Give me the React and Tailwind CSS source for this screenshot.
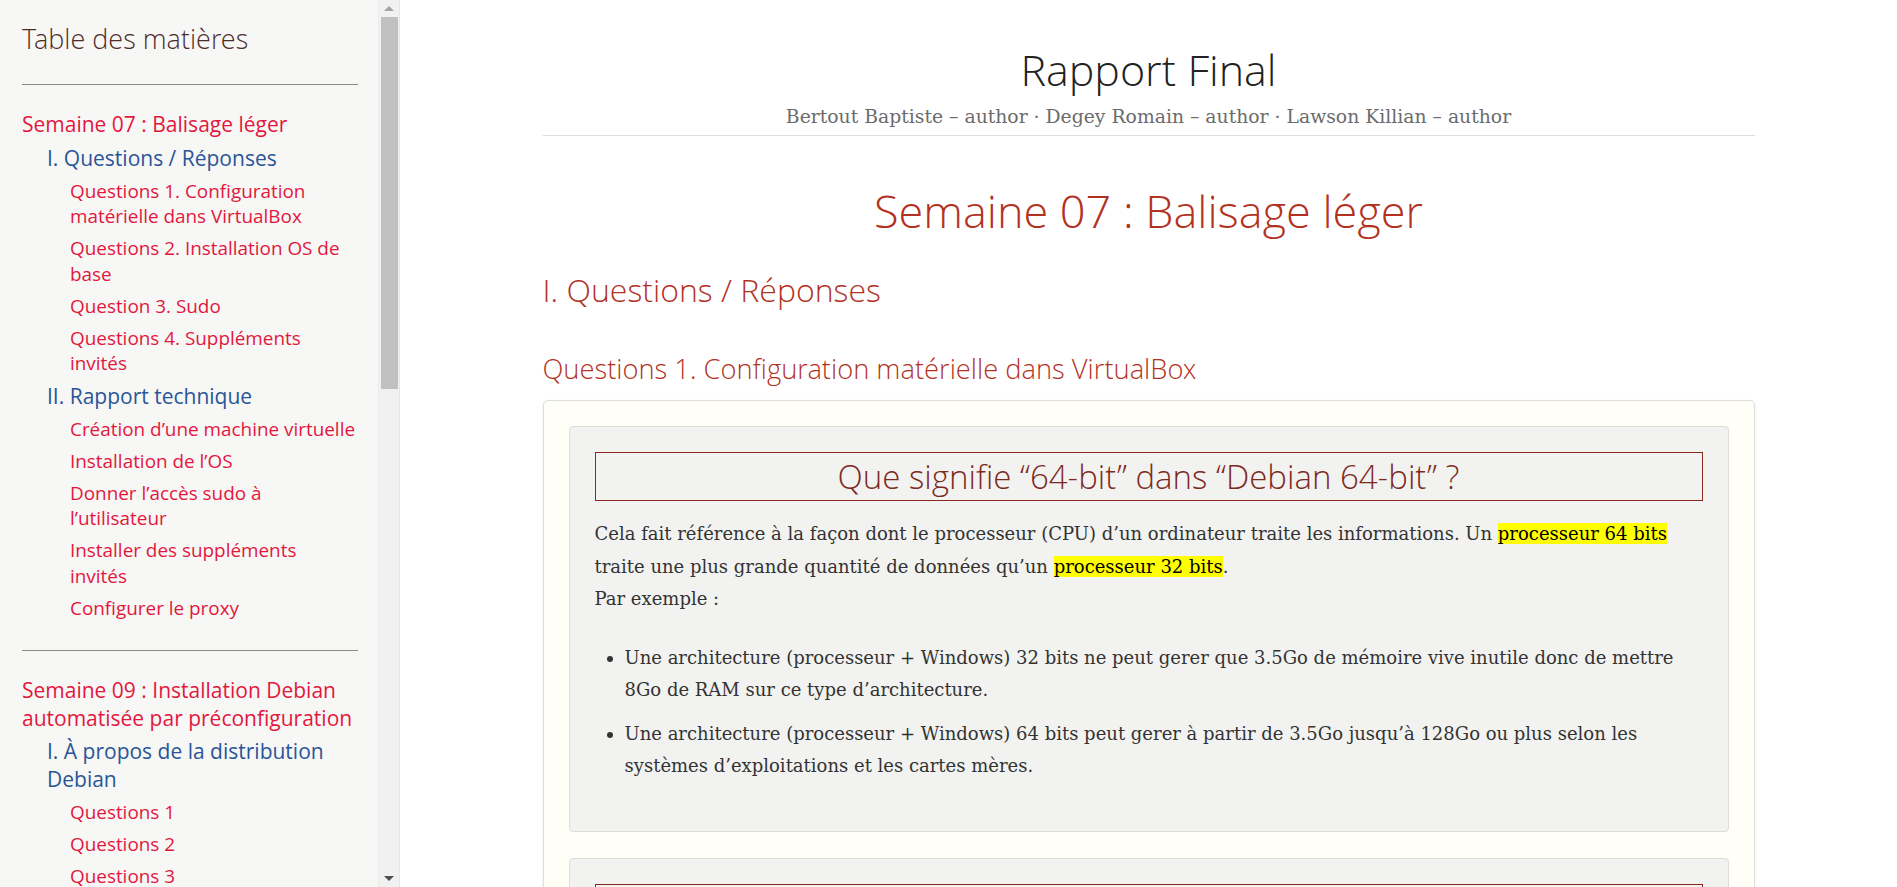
const toc = [
  {
    title: "Semaine 07 : Balisage léger",
    sections: [
      {
        title: "I. Questions / Réponses",
        items: [
          "Questions 1. Configuration matérielle dans VirtualBox",
          "Questions 2. Installation OS de base",
          "Question 3. Sudo",
          "Questions 4. Suppléments invités",
        ],
      },
      {
        title: "II. Rapport technique",
        items: [
          "Création d’une machine virtuelle",
          "Installation de l’OS",
          "Donner l’accès sudo à l’utilisateur",
          "Installer des suppléments invités",
          "Configurer le proxy",
        ],
      },
    ],
  },
  {
    title: "Semaine 09 : Installation Debian automatisée par préconfiguration",
    sections: [
      {
        title: "I. À propos de la distribution Debian",
        items: ["Questions 1", "Questions 2", "Questions 3", "Questions 4", "Questions 5"],
      },
    ],
  },
];

const light = "font-['Open_Sans_Light','Open_Sans',sans-serif] font-light";

function Toc() {
  return (
    <nav className="flex-1 overflow-hidden pl-[22px] pr-[20px] pt-[20px] font-['Open_Sans',sans-serif]">
      <h2 className={`${light} text-[27px] leading-[38px] text-[#4f2c2c]`}>Table des matières</h2>
      {toc.map((week, wi) => (
        <div key={wi}>
          <hr className={`border-0 border-t border-[#8a8a8a] ${wi === 0 ? "mt-[26px]" : "mt-[29px]"}`} />
          <ul className="mt-[26px]">
            <li>
              <a className="block text-[21px] leading-[27.5px] text-[#e3173e]">{week.title}</a>
              <ul className="pl-[25px]">
                {week.sections.map((s, si) => (
                  <li key={si} className="mt-[6px]">
                    <a className="block text-[21px] leading-[27.5px] text-[#2a5597]">{s.title}</a>
                    <ul className="pl-[23px]">
                      {s.items.map((it, ii) => (
                        <li key={ii} className="mt-[6.5px] text-[18.9px] leading-[25.5px] text-[#e3173e]">
                          {it}
                        </li>
                      ))}
                    </ul>
                  </li>
                ))}
              </ul>
            </li>
          </ul>
        </div>
      ))}
    </nav>
  );
}

function Scrollbar() {
  return (
    <div className="flex w-[21px] shrink-0 flex-col items-center border-l border-[#ececec] bg-[#f1f1f1]">
      <div className="flex h-[17px] w-full items-center justify-center">
        <div className="h-0 w-0 border-x-[5px] border-b-[5px] border-x-transparent border-b-[#a3a3a3]" />
      </div>
      <div className="h-[372px] w-[17px] bg-[#c1c1c1]" />
      <div className="flex-1" />
      <div className="flex h-[17px] w-full items-center justify-center">
        <div className="h-0 w-0 border-x-[5px] border-t-[5px] border-x-transparent border-t-[#505050]" />
      </div>
    </div>
  );
}

const serif = "font-['DejaVu_Serif',serif]";

function Mark({ children }) {
  return <mark className="bg-[#ffff00] text-black">{children}</mark>;
}

function QuestionCard({ title, children }) {
  return (
    <div className="rounded-[4px] border border-[#dcdcdc] bg-[#f2f2f0] px-[25px] pt-[25px] pb-[48px]">
      <h4 className={`${light} border border-[#8b2a1c] text-center text-[33px] leading-[47px] text-[#7d2a1e]`}>
        {title}
      </h4>
      {children}
    </div>
  );
}

export default function App() {
  return (
    <div className="flex h-[887px] w-full overflow-hidden bg-white">
      <aside className="flex h-full w-[400px] shrink-0 border-r border-[#e6e6e6] bg-[#f7f7f5]">
        <Toc />
        <Scrollbar />
      </aside>
      <main className="h-full flex-1 overflow-hidden">
        <div className="mx-auto w-[1212px]">
          <header className="border-b border-[#dddddd] pb-[4px] pt-[41px] text-center">
            <h1 className={`${light} text-[43px] leading-[58px] text-[#222]`}>Rapport Final</h1>
            <p className={`${serif} mt-[4px] text-[18.8px] leading-[28px] text-[#6b6b6b]`}>
              Bertout Baptiste – author · Degey Romain – author · Lawson Killian – author
            </p>
          </header>
          <h1 className={`${light} mt-[45px] text-center text-[45px] leading-[60px] text-[#b3321f]`}>
            Semaine 07 : Balisage léger
          </h1>
          <h2 className={`${light} mt-[28px] text-[32px] leading-[42px] text-[#b3321f]`}>
            I. Questions / Réponses
          </h2>
          <h3 className={`${light} mt-[40px] text-[27.3px] leading-[36px] text-[#b3321f]`}>
            Questions 1. Configuration matérielle dans VirtualBox
          </h3>
          <div className="mt-[13px] rounded-[5px] border border-[#dedede] bg-[#fffff8] p-[25px] shadow-[0_1px_3px_rgba(0,0,0,0.08)]">
            <QuestionCard title="Que signifie “64-bit” dans “Debian 64-bit” ?">
              <p className={`${serif} mt-[17px] text-[18px] leading-[32.5px] text-[#333]`}>
                Cela fait référence à la façon dont le processeur (CPU) d’un ordinateur traite les informations. Un{" "}
                <Mark>processeur 64 bits</Mark> traite une plus grande quantité de données qu’un{" "}
                <Mark>processeur 32 bits</Mark>.
                <br />
                Par exemple :
              </p>
              <ul className={`${serif} mt-[26px] list-disc pl-[30px] text-[18px] leading-[32.5px] text-[#333]`}>
                <li>
                  Une architecture (processeur + Windows) 32 bits ne peut gerer que 3.5Go de mémoire vive inutile donc
                  de mettre 8Go de RAM sur ce type d’architecture.
                </li>
                <li className="mt-[11px]">
                  Une architecture (processeur + Windows) 64 bits peut gerer à partir de 3.5Go jusqu’à 128Go ou plus
                  selon les systèmes d’exploitations et les cartes mères.
                </li>
              </ul>
            </QuestionCard>
            <div className="mt-[26px]">
              <QuestionCard title="Quelle est la taille recommandée pour le disque dur ?">
                <p className={`${serif} mt-[17px] text-[18px] leading-[32.5px] text-[#333]`}>
                  La taille recommandée dépend de l’usage prévu pour la machine virtuelle.
                </p>
              </QuestionCard>
            </div>
          </div>
        </div>
      </main>
    </div>
  );
}
